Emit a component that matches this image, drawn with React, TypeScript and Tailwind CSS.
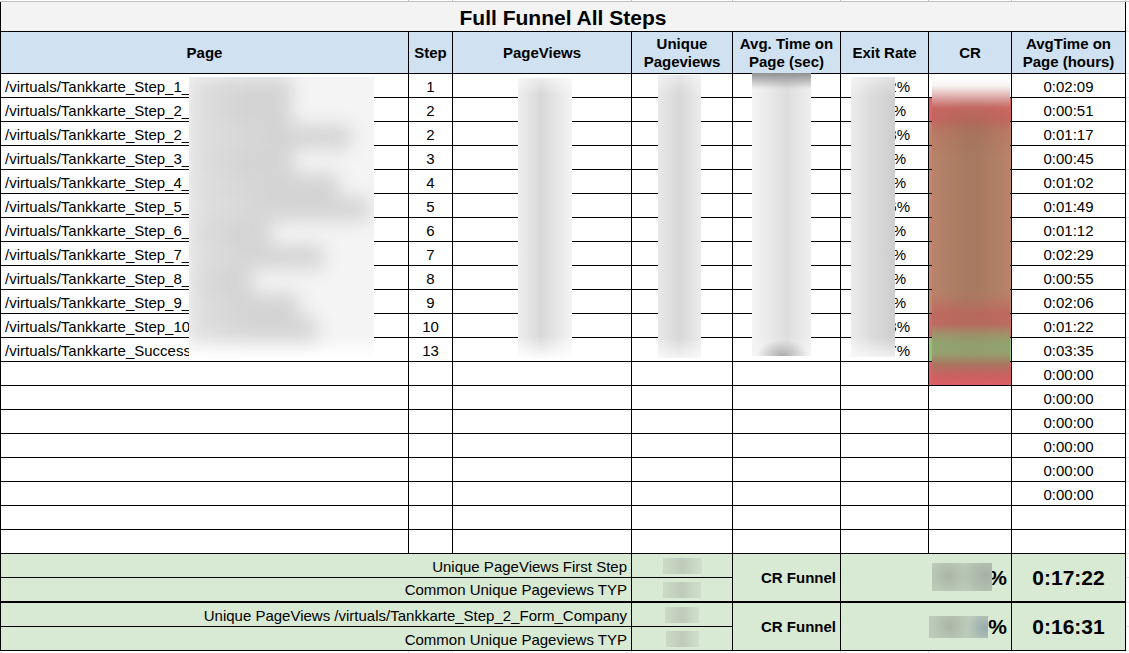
import type { ReactNode } from 'react';
import clsx from 'clsx';

interface FunnelRow {
  page?: string;
  step?: number;
  exit?: string;
  cr?: string;
  time?: string;
}

const ROWS: FunnelRow[] = [
  { page: '/virtuals/Tankkarte_Step_1_', step: 1, exit: '2%', time: '0:02:09' },
  { page: '/virtuals/Tankkarte_Step_2_', step: 2, exit: '%', cr: 'bg-[#dc6464]', time: '0:00:51' },
  { page: '/virtuals/Tankkarte_Step_2_', step: 2, exit: '3%', cr: 'bg-[#c0846c]', time: '0:01:17' },
  { page: '/virtuals/Tankkarte_Step_3_', step: 3, exit: '%', cr: 'bg-[#c0866e]', time: '0:00:45' },
  { page: '/virtuals/Tankkarte_Step_4_', step: 4, exit: '%', cr: 'bg-[#c0886f]', time: '0:01:02' },
  { page: '/virtuals/Tankkarte_Step_5_', step: 5, exit: '6%', cr: 'bg-[#c0866e]', time: '0:01:49' },
  { page: '/virtuals/Tankkarte_Step_6_', step: 6, exit: '%', cr: 'bg-[#c0846c]', time: '0:01:12' },
  { page: '/virtuals/Tankkarte_Step_7_', step: 7, exit: '%', cr: 'bg-[#c0886f]', time: '0:02:29' },
  { page: '/virtuals/Tankkarte_Step_8_', step: 8, exit: '%', cr: 'bg-[#c0886f]', time: '0:00:55' },
  { page: '/virtuals/Tankkarte_Step_9_', step: 9, exit: '%', cr: 'bg-[#c0886f]', time: '0:02:06' },
  { page: '/virtuals/Tankkarte_Step_10', step: 10, exit: '3%', cr: 'bg-[#cf6e68]', time: '0:01:22' },
  { page: '/virtuals/Tankkarte_Success', step: 13, exit: '7%', cr: 'bg-[#93c47d]', time: '0:03:35' },
  { cr: 'bg-[#dc6064]', time: '0:00:00' },
  { time: '0:00:00' },
  { time: '0:00:00' },
  { time: '0:00:00' },
  { time: '0:00:00' },
  { time: '0:00:00' },
  {},
  {},
];

const HEADERS = ['Page', 'Step', 'PageViews', 'Unique Pageviews', 'Avg. Time on Page (sec)', 'Exit Rate', 'CR', 'AvgTime on Page (hours)'];

// visible length of every redacted page name
const PAGE_SMUDGES = [103, 103, 162, 105, 150, 180, 82, 135, 64, 110, 128];

export default function App() {
  return (
    <main className="bg-white font-['Liberation_Sans',Arial,sans-serif] text-[15px] leading-5 text-black">
      <table className="w-full table-fixed border-separate border-spacing-0">
        <colgroup>
          <col />
          <col className="w-[44px]" />
          <col className="w-[179px]" />
          <col className="w-[101px]" />
          <col className="w-[108px]" />
          <col className="w-[88px]" />
          <col className="w-[83px]" />
          <col className="w-[114px]" />
          <col className="w-[3px]" />
        </colgroup>
        <thead>
          <tr aria-hidden="true">
            {HEADERS.map((h) => (
              <td key={h} className="h-[2px] border-r border-b border-[#c0c0c0]" />
            ))}
            <td className="h-[2px] border-b border-[#c0c0c0]" />
          </tr>
          <tr>
            <th colSpan={8} className="h-[30px] border-x border-b border-black bg-[#f3f3f3] align-bottom text-[21px] leading-[26px] font-bold">
              Full Funnel All Steps
            </th>
            <Gutter />
          </tr>
          <tr>
            {HEADERS.map((h) => (
              <th
                key={h}
                scope="col"
                className="h-[42px] border-r border-b border-black bg-[#d0e1f1] px-[3px] align-middle leading-[18px] font-bold first:border-l"
              >
                {h}
              </th>
            ))}
            <Gutter />
          </tr>
        </thead>
        <tbody>
          {ROWS.map((row, i) => (
            <tr key={i}>
              <Cell className="border-l">
                {row.page}
                {i === 0 && <PageSmudge />}
              </Cell>
              <Cell className="text-center">{row.step}</Cell>
              <Cell>{i === 0 && <PageViewsSmudge />}</Cell>
              <Cell>{i === 0 && <UniqueSmudge />}</Cell>
              <Cell>{i === 0 && <AvgTimeSmudge />}</Cell>
              <Cell className={clsx('text-right', row.exit === '%' ? 'pr-[22px]' : 'pr-[18px]')}>
                {row.exit}
                {i === 0 && <ExitSmudge />}
              </Cell>
              <Cell className={row.cr}>{i === 0 && <CrSmudge />}</Cell>
              <Cell className="text-center">{row.time}</Cell>
              <Gutter />
            </tr>
          ))}
        </tbody>
        <tfoot>
          <tr>
            <SumLabel>Unique PageViews First Step</SumLabel>
            <SumValue width="w-[39px]" />
            <td rowSpan={2} className="border-r border-b-2 border-black bg-[#d8e9d4] px-1 text-right align-middle font-bold">
              CR Funnel
            </td>
            <td rowSpan={2} colSpan={2} className="relative border-r border-b-2 border-black bg-[#d8e9d4] px-1 text-right align-middle text-[21px] font-bold">
              %
              <div className="absolute top-[9px] right-[19px] h-[28px] w-[60px] bg-[#bccbb9] bg-[radial-gradient(circle_at_28%_45%,#a9b5a6_0%,transparent_42%),radial-gradient(circle_at_90%_45%,#a4b0a5_0%,transparent_45%)]" />
            </td>
            <td rowSpan={2} className="border-r border-b-2 border-black bg-[#d8e9d4] text-center align-middle text-[21px] font-bold">
              0:17:22
            </td>
            <Gutter />
          </tr>
          <tr>
            <SumLabel thick>Common Unique Pageviews TYP</SumLabel>
            <SumValue width="w-[38px]" thick />
            <Gutter thick />
          </tr>
          <tr>
            <SumLabel>Unique PageViews /virtuals/Tankkarte_Step_2_Form_Company</SumLabel>
            <SumValue width="w-[34px]" />
            <td rowSpan={2} className="border-r border-b border-black bg-[#d8e9d4] px-1 text-right align-middle font-bold">
              CR Funnel
            </td>
            <td rowSpan={2} colSpan={2} className="relative border-r border-b border-black bg-[#d8e9d4] px-1 text-right align-middle text-[21px] font-bold">
              %
              <div className="absolute top-[13px] right-[23px] h-[22px] w-[59px] bg-[#bccbb9] bg-[radial-gradient(circle_at_35%_45%,#a9b5a6_0%,transparent_45%),radial-gradient(circle_at_95%_55%,#98abaf_0%,transparent_32%)]" />
            </td>
            <td rowSpan={2} className="border-r border-b border-black bg-[#d8e9d4] text-center align-middle text-[21px] font-bold">
              0:16:31
            </td>
            <Gutter />
          </tr>
          <tr>
            <SumLabel>Common Unique Pageviews TYP</SumLabel>
            <SumValue width="w-[33px]" />
            <Gutter />
          </tr>
          <tr aria-hidden="true">
            {HEADERS.map((h) => (
              <td key={h} className="h-[2px] border-r border-[#e2e2e2]" />
            ))}
            <td />
          </tr>
        </tfoot>
      </table>
    </main>
  );
}

function Cell({ className, children }: { className?: string; children?: ReactNode }) {
  return (
    <td className={clsx('relative h-6 border-r border-b border-black px-1 align-bottom whitespace-nowrap', className)}>
      {children}
    </td>
  );
}

// start of the next, unused sheet column
function Gutter({ thick }: { thick?: boolean }) {
  return <td aria-hidden="true" className={clsx('border-b border-[#e2e2e2]', thick && 'h-[25px]')} />;
}

function SumLabel({ thick, children }: { thick?: boolean; children: ReactNode }) {
  return (
    <td
      colSpan={3}
      className={clsx(
        'border-r border-l border-black bg-[#d8e9d4] px-1 text-right',
        thick ? 'h-[25px] border-b-2 align-middle' : 'h-6 border-b align-bottom',
      )}
    >
      {children}
    </td>
  );
}

function SumValue({ width, thick }: { width: string; thick?: boolean }) {
  return (
    <td className={clsx('border-r border-black bg-[#d8e9d4] align-middle', thick ? 'border-b-2' : 'border-b')}>
      <div className={clsx('mx-auto h-4 bg-linear-to-r from-[#cbdac6] via-[#becbba] to-[#d0dfcb]', width)} />
    </td>
  );
}

function PageSmudge() {
  return (
    <div className="absolute top-[3px] left-[188px] z-10 h-[281px] w-[185px] overflow-hidden bg-linear-to-b from-[#f4f4f4] from-92% to-white">
      <div className="flex flex-col blur-[9px]">
        {PAGE_SMUDGES.map((width, i) => (
          <div key={i} className="h-6 bg-linear-to-r from-[#e0e0e0] to-[#d4d4d4] to-50%" style={{ width }} />
        ))}
      </div>
    </div>
  );
}

function PageViewsSmudge() {
  return (
    <div className="absolute top-[4px] left-[65px] z-10 h-[282px] w-[54px] bg-linear-to-r from-[#eeeeee] via-[#d8d8d8] via-42% to-[#f4f4f4]">
      <div className="h-full bg-linear-to-b from-white/50 via-transparent via-6% to-transparent" />
      <div className="absolute inset-x-0 bottom-0 h-6 bg-linear-to-b from-transparent to-white" />
    </div>
  );
}

function UniqueSmudge() {
  return (
    <div className="absolute top-px left-[26px] z-10 h-[283px] w-[43px] bg-linear-to-r from-[#e9e9e9] via-[#d7d7d7] to-[#ececec]">
      <div className="h-full bg-linear-to-b from-white/40 via-transparent via-7% to-transparent" />
      <div className="absolute inset-x-0 bottom-0 h-5 bg-linear-to-b from-transparent to-white/70" />
    </div>
  );
}

function AvgTimeSmudge() {
  return (
    <div className="absolute -top-px left-[19px] z-10 h-[283px] w-[59px] bg-linear-to-r from-[#f4f4f4] via-[#dddddd] via-60% to-[#efefef]">
      <div className="h-4 bg-linear-to-b from-[#8f9092] to-transparent" />
      <div className="absolute inset-x-0 bottom-0 h-5 bg-[radial-gradient(ellipse_at_52%_100%,#aaaaaa_0%,transparent_60%),linear-gradient(to_bottom,transparent,#f4f4f4)]" />
    </div>
  );
}

function ExitSmudge() {
  return (
    <div className="absolute top-[3px] left-[10px] z-10 h-[280px] w-[44px] bg-linear-to-r from-[#ececec] via-[#dadada] to-[#cfcdcf]">
      <div className="h-full bg-linear-to-b from-white/40 via-transparent via-7% to-transparent" />
      <div className="absolute inset-x-0 bottom-0 h-5 bg-linear-to-b from-transparent to-white/70" />
    </div>
  );
}

function CrSmudge() {
  return (
    <div className="absolute top-[4px] left-[3px] z-10 h-[307px] w-[78px] bg-[linear-gradient(to_bottom,#ffffff_0px,#f6f2f2_8px,#dba5a3_20px,#ca6763_30px,#c3675f_42px,#ba7a65_54px,#b9846b_80px,#b9846b_214px,#c0695f_236px,#bd6c61_246px,#a0946c_256px,#90a66f_266px,#97a06f_276px,#ab7460_287px,#cc6061_298px,#dc6064_307px)]">
      <div className="h-full bg-[linear-gradient(to_right,transparent,#8c6a5066_45%,#8c6a5066_60%,transparent)] mask-[linear-gradient(to_bottom,transparent_18px,black_50px,black_210px,#00000066_240px,transparent_300px)]" />
    </div>
  );
}
